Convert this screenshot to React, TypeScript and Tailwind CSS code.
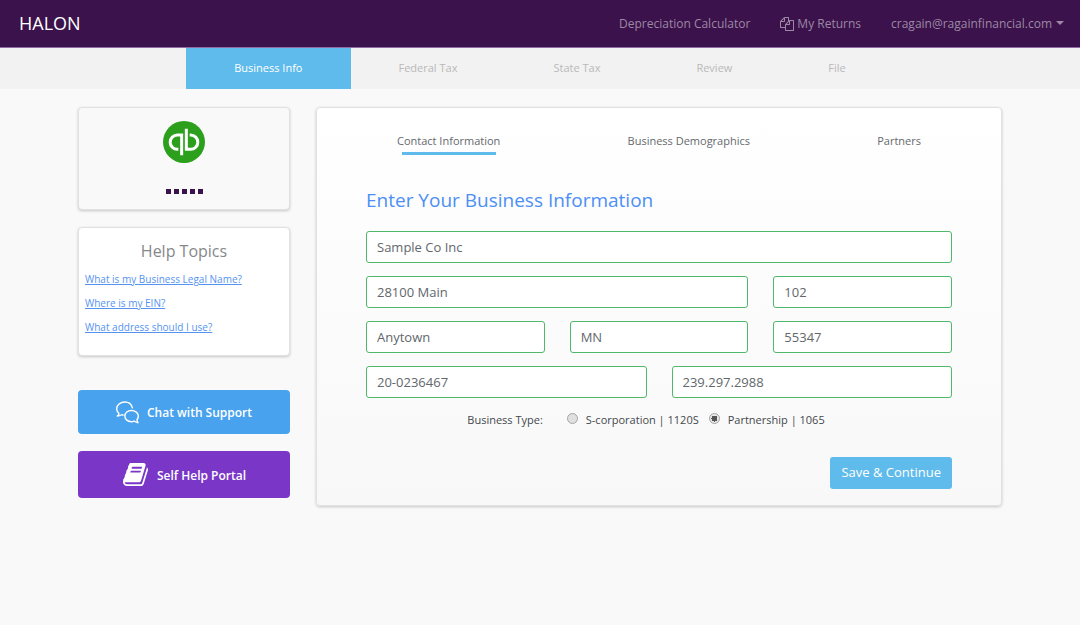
import { useState } from 'react';
import type { ReactNode } from 'react';

const steps = ['Business Info', 'Federal Tax', 'State Tax', 'Review', 'File'];
const sections = ['Contact Information', 'Business Demographics', 'Partners'];
const helpTopics = [
  'What is my Business Legal Name?',
  'Where is my EIN?',
  'What address should I use?',
];

const fields = [
  { name: 'Business name', value: 'Sample Co Inc', span: 'col-span-6' },
  { name: 'Street address', value: '28100 Main', span: 'col-span-4' },
  { name: 'Suite', value: '102', span: 'col-span-2' },
  { name: 'City', value: 'Anytown', span: 'col-span-2' },
  { name: 'State', value: 'MN', span: 'col-span-2' },
  { name: 'Zip code', value: '55347', span: 'col-span-2' },
  { name: 'EIN', value: '20-0236467', span: 'col-span-3' },
  { name: 'Phone', value: '239.297.2988', span: 'col-span-3' },
];

const businessTypes = [
  { id: '1120s', label: 'S-corporation | 1120S' },
  { id: '1065', label: 'Partnership | 1065' },
];

const FilesIcon = () => (
  <svg viewBox="0 0 1792 1792" className="size-[14px]" fill="currentColor" aria-hidden="true">
    <path d="M1696 384q40 0 68 28t28 68v1216q0 40-28 68t-68 28h-960q-40 0-68-28t-28-68v-288h-544q-40 0-68-28t-28-68v-672q0-40 20-88t48-76l408-408q28-28 76-48t88-20h416q40 0 68 28t28 68v328q68-40 128-40h416zm-544 213l-299 299h299v-299zm-640-384l-299 299h299v-299zm196 647l316-316v-416h-384v416q0 40-28 68t-68 28h-416v640h512v-256q0-40 20-88t48-76zm956 804v-1152h-384v416q0 40-28 68t-68 28h-416v640h896z" />
  </svg>
);

const BookIcon = () => (
  <svg viewBox="0 0 1792 1792" className="size-[27px]" fill="currentColor" aria-hidden="true">
    <path d="M1703 478q40 57 18 129l-275 906q-19 64-76.5 107.5t-122.5 43.5h-923q-77 0-148.5-53.5t-99.5-131.5q-24-67-2-127 0-4 3-27t4-37q1-8-3-21.5t-3-19.5q2-11 8-21t16.5-23.5 16.5-23.5q23-38 45-91.5t30-91.5q3-10 .5-30t-.5-28q3-11 17-28t17-23q21-36 42-92t25-90q1-9-2.5-32t.5-28q4-13 22-30.5t22-22.5q19-26 42.5-84.5t27.5-96.5q1-8-3-25.5t-2-26.5q2-8 9-18t18-23 17-21q8-12 16.5-30.5t15-35 16-36 19.5-32 26.5-23.5 36-11.5 47.5 5.5l-1 3q38-9 51-9h761q74 0 114 56t18 130l-274 906q-36 119-71.5 153.5t-128.5 34.5h-869q-27 0-38 15-11 16-1 43 24 70 144 70h923q29 0 56-15.5t35-41.5l300-987q7-22 5-57 38 15 59 43zm-1064 2q-4 13 2 22.5t20 9.5h608q13 0 25.5-9.5t16.5-22.5l21-64q4-13-2-22.5t-20-9.5h-608q-13 0-25.5 9.5t-16.5 22.5zm-83 256q-4 13 2 22.5t20 9.5h608q13 0 25.5-9.5t16.5-22.5l21-64q4-13-2-22.5t-20-9.5h-608q-13 0-25.5 9.5t-16.5 22.5z" />
  </svg>
);

const ChatIcon = () => (
  <svg
    viewBox="0 0 70 68"
    className="h-[23px] w-[23px]"
    fill="none"
    stroke="currentColor"
    strokeWidth="4.2"
    strokeLinecap="round"
    strokeLinejoin="round"
    aria-hidden="true"
  >
    <path d="M50 20C47 9 38 2 27 2C13 2 2 11 2 23C2 29 5 33 9 37C9 40 7 43 4 45C10 45 14 43 17 41L22 42" />
    <path d="M47 28C36 28 27 35 27 45C27 55 36 62 47 62C50 62 53 61 55 60C59 63 63 65 67 65C65 62 64 60 64 56C66 53 68 49 68 45C68 35 58 28 47 28Z" />
  </svg>
);

const QuickBooksLogo = () => (
  <svg viewBox="0 0 126 126" className="size-[42px]" role="img" aria-label="QuickBooks">
    <circle cx="63" cy="63" r="63" fill="#2ca01c" />
    <g fill="none" stroke="#fff" strokeWidth="9">
      <path d="M46 85H43A21 21 0 0 1 43 42H56V103" />
      <path d="M80 42H83A21 21 0 0 1 83 85H70V23" />
    </g>
  </svg>
);

const Card = ({ className, children }: { className: string; children: ReactNode }) => (
  <section
    className={`rounded border border-[#dfe1e3] shadow-[0_1px_3px_rgba(0,0,0,0.2)] ${className}`}
  >
    {children}
  </section>
);

const Header = () => (
  <header className="flex h-12 items-center justify-between border-b border-[#8f6ba3] bg-[#3b124b] pr-4 pl-[19px]">
    <a href="#home" className="text-[18px] text-white">
      HALON
    </a>
    <nav className="flex items-center gap-[30px] text-[12px] text-[#9d88a5]">
      <a href="#depreciation">Depreciation Calculator</a>
      <a href="#returns" className="flex items-center gap-[3px]">
        <FilesIcon />
        My Returns
      </a>
      <button type="button" className="flex items-center gap-1">
        cragain@ragainfinancial.com
        <span className="mb-[2px] border-x-4 border-t-4 border-x-transparent border-t-current" />
      </button>
    </nav>
  </header>
);

const StepNav = () => (
  <nav className="flex h-[41px] justify-center bg-[#f2f2f2] text-[11px]">
    {steps.map((step, i) => (
      <a
        key={step}
        href={`#step-${i + 1}`}
        className={`flex items-center px-12 ${i === 0 ? 'bg-[#5fbbeb] text-white' : 'text-[#b9b9b9]'}`}
      >
        {step}
      </a>
    ))}
  </nav>
);

const Sidebar = () => (
  <aside className="flex w-[212px] shrink-0 flex-col">
    <Card className="flex h-[103px] flex-col items-center bg-[#f9f9f9] pt-[13px]">
      <QuickBooksLogo />
      <div className="mt-[26px] flex gap-[3px]">
        {[0, 1, 2, 3, 4].map((dot) => (
          <span key={dot} className="size-[5px] bg-[#3b124b]" />
        ))}
      </div>
    </Card>
    <Card className="mt-[17px] bg-white px-[6px] pt-[11px] pb-4">
      <h2 className="text-center text-[16px] leading-6 text-[#86888a]">Help Topics</h2>
      <ul className="mt-1 text-[10px] leading-6 text-[#5593f0]">
        {helpTopics.map((topic) => (
          <li key={topic}>
            <a href="#help" className="underline">
              {topic}
            </a>
          </li>
        ))}
      </ul>
    </Card>
    <button
      type="button"
      className="mt-[34px] flex h-11 items-center justify-center gap-2 rounded bg-[#48a2ee] text-[12px] font-semibold text-white"
    >
      <ChatIcon />
      <span className="pt-[2px]">Chat with Support</span>
    </button>
    <button
      type="button"
      className="mt-[17px] flex h-[47px] items-center justify-center gap-2 rounded bg-[#7a37c7] text-[12px] font-semibold text-white"
    >
      <BookIcon />
      <span className="pt-[2px]">Self Help Portal</span>
    </button>
  </aside>
);

const BusinessForm = () => {
  const [type, setType] = useState('1065');

  return (
    <Card className="min-w-0 flex-1 bg-linear-to-b from-white to-[#f8f8f8] px-[49px] pt-[25px] pb-4">
      <nav className="flex justify-between px-[31px] text-[11px] leading-4 text-[#65696d]">
        {sections.map((section, i) => (
          <a key={section} href={`#section-${i + 1}`} className="flex flex-col items-center">
            {section}
            {i === 0 && <span className="mt-[3px] h-[3px] w-[94px] bg-[#5fbbeb]" />}
          </a>
        ))}
      </nav>
      <h1 className="mt-[33px] text-[19px] leading-6 text-[#4c8ff5]">
        Enter Your Business Information
      </h1>
      <form onSubmit={(e) => e.preventDefault()}>
        <div className="mt-[19px] grid grid-cols-6 gap-x-[25px] gap-y-[13px]">
          {fields.map(({ name, value, span }) => (
            <input
              key={name}
              type="text"
              aria-label={name}
              defaultValue={value}
              className={`h-8 w-full min-w-0 rounded-[3px] border border-[#4fb86a] bg-white px-[10px] text-[13px] text-[#62676c] ${span}`}
            />
          ))}
        </div>
        <fieldset className="mt-3 flex items-center justify-center pr-4 text-[11px] leading-5 text-[#44484c]">
          <legend className="float-left mr-6">Business Type:</legend>
          {businessTypes.map(({ id, label }) => (
            <label key={id} className="mr-[10px] flex items-center gap-2">
              <input
                type="radio"
                name="business-type"
                value={id}
                checked={type === id}
                onChange={() => setType(id)}
                className="mb-[3px] size-[11px] appearance-none rounded-full border border-[#a5a5a5] bg-[#e0e0e0] checked:bg-[radial-gradient(circle,#555_0_3px,#e8e8e8_3px)]"
              />
              {label}
            </label>
          ))}
        </fieldset>
        <div className="mt-[27px] flex justify-end">
          <button type="submit" className="h-8 rounded-[3px] bg-[#5fbbeb] px-[11px] text-[13px] text-white">
            Save &amp; Continue
          </button>
        </div>
      </form>
    </Card>
  );
};

export default function App() {
  return (
    <div className="min-h-screen bg-[#f9f9f9] font-['Open_Sans','Noto_Sans',sans-serif]">
      <Header />
      <StepNav />
      <main className="flex items-start gap-[26px] px-[78px] pt-[18px]">
        <Sidebar />
        <BusinessForm />
      </main>
    </div>
  );
}
